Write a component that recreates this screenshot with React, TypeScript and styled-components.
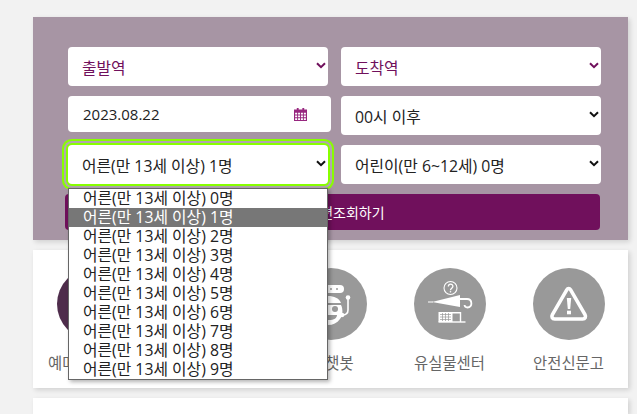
import React from "react";
import styled, { createGlobalStyle } from "styled-components";

const Global = createGlobalStyle`
  html, body { margin: 0; padding: 0; height: 414px; overflow: hidden; background: #f2f2f2; }
  body { font-family: "Open Sans", "Noto Sans CJK KR", sans-serif; }
`;

const Page = styled.div`
  width: 595px;
  margin-left: 33px;
  padding-top: 17px;
  display: flex;
  flex-direction: column;
  gap: 10px;
`;

const SearchPanel = styled.section`
  position: relative;
  height: 223px;
  box-sizing: border-box;
  padding: 30px 27px 0 35px;
  background: #a795a4;
  box-shadow: 2px 2px 5px rgba(0, 0, 0, 0.14);
`;

const FormGrid = styled.div`
  display: grid;
  grid-template-columns: 260px 260px;
  grid-auto-rows: 39px;
  column-gap: 13px;
  row-gap: 10px;
`;

const Field = styled.div<{ $tone?: "purple"; $focused?: boolean; $wide?: boolean; $short?: boolean }>`
  box-sizing: border-box;
  height: ${(p) => (p.$short ? "36px" : "39px")};
  width: ${(p) => (p.$wide ? "263px" : "260px")};
  display: flex;
  align-items: center;
  justify-content: space-between;
  padding: 2px 2px 0 14px;
  background: #fff;
  border-radius: 4px;
  font-size: 15.8px;
  color: ${(p) => (p.$tone === "purple" ? "#70105c" : "#222")};
  ${(p) => p.$focused && "box-shadow: 0 0 0 2px #88ff00, 0 0 0 4px #b2a5b0, 0 0 0 6px #88ff00;"}
`;

const DateField = styled(Field)`
  padding: 0 24px 0 15px;
  font-size: 15px;
`;

const Chevron = styled.svg<{ $tone?: "purple" }>`
  width: 10px;
  height: 7px;
  margin-bottom: 4px;
  fill: none;
  stroke: ${(p) => (p.$tone === "purple" ? "#70105c" : "#111")};
  stroke-width: 2;
  flex: none;
`;

const SubmitButton = styled.button`
  display: block;
  box-sizing: border-box;
  width: 535px;
  height: 36px;
  margin: 10px 0 0 -3px;
  padding: 0 0 0 14px;
  border: 0;
  border-radius: 4px;
  background: #70105c;
  color: #fff;
  font: inherit;
  font-size: 14px;
  text-align: center;
`;

const OptionList = styled.ul`
  position: absolute;
  left: 35px;
  top: 171px;
  z-index: 5;
  box-sizing: border-box;
  width: 260px;
  height: 192px;
  margin: 0;
  padding: 0;
  list-style: none;
  background: #fff;
  border: 1px solid #666;
  box-shadow: 2px 2px 4px rgba(0, 0, 0, 0.3);
`;

const Option = styled.li<{ $active?: boolean }>`
  height: 19px;
  line-height: 19px;
  padding-left: 14px;
  font-size: 15.8px;
  white-space: nowrap;
  color: ${(p) => (p.$active ? "#fff" : "#222")};
  background: ${(p) => (p.$active ? "#777" : "transparent")};
`;

const MenuCard = styled.section`
  height: 138px;
  box-sizing: border-box;
  padding-top: 18px;
  background: #fff;
  box-shadow: 2px 2px 5px rgba(0, 0, 0, 0.14);
  display: grid;
  grid-template-columns: repeat(5, 119px);
`;

const MenuItem = styled.div`
  display: flex;
  flex-direction: column;
  align-items: center;
  gap: 11px;
  font-size: 15.4px;
  color: #666;
  white-space: nowrap;
`;

const Circle = styled.div<{ $dark?: boolean }>`
  width: 72px;
  height: 72px;
  border-radius: 50%;
  background: ${(p) => (p.$dark ? "#4f2d4c" : "#999")};
  display: flex;
  align-items: center;
  justify-content: center;
`;

const BottomCard = styled.section`
  height: 16px;
  background: #fff;
  box-shadow: 2px 2px 5px rgba(0, 0, 0, 0.14);
`;

const ChevronIcon = ({ tone }: { tone?: "purple" }) => (
  <Chevron $tone={tone} viewBox="0 0 10 7">
    <path d="M1 1.200 5 5.200 9 1.200" />
  </Chevron>
);

const CalendarIcon = () => (
  <svg width="13" height="13" viewBox="0 0 14 14">
    <path fill="#97277f" fillRule="evenodd" d="M3 0h2v1.500h4V0h2v1.500h3V14H0V1.500h3zM1.200 5v2h2.200V5zm3.200 0v2h2.100V5zm3.100 0v2h2.100V5zm3.100 0v2h2.200V5zM1.200 8v2h2.200V8zm3.200 0v2h2.100V8zm3.100 0v2h2.100V8zm3.100 0v2h2.200V8zm-9.400 3v1.800h2.200V11zm3.200 0v1.800h2.100V11zm3.100 0v1.800h2.100V11zm3.100 0v1.800h2.200V11z" />
  </svg>
);

const TicketIcon = () => (
  <svg width="40" height="32" viewBox="0 0 40 32" fill="#fff">
    <path fillRule="evenodd" d="M2 6h36v20H2zM6 10v12h4V10zm8 0v3h16v-3zm0 6v3h16v-3z" />
  </svg>
);

const TrainIcon = () => (
  <svg width="36" height="36" viewBox="0 0 36 36" fill="#fff">
    <path fillRule="evenodd" d="M10 4h16a4 4 0 0 1 4 4v16a4 4 0 0 1-4 4H10a4 4 0 0 1-4-4V8a4 4 0 0 1 4-4zm0 4v8h16V8zm2 12a2 2 0 1 0 0 4 2 2 0 0 0 0-4zm12 0a2 2 0 1 0 0 4 2 2 0 0 0 0-4z" />
  </svg>
);

const BotIcon = () => (
  <svg width="72" height="72" viewBox="0 0 72 72">
    <rect x="20" y="17" width="29" height="8" rx="4" fill="#fff" />
    <circle cx="36" cy="21" r="1" fill="#999" />
    <circle cx="42" cy="21" r="1" fill="#999" />
    <path d="M20 35c1-4 7-7 13-7s11 2 13 7z" fill="#fff" />
    <path d="M20 37h26c2 4 2 10-1 14-3 4-7 6-12 6s-10-2-13-6c-3-4-2-10 0-14z" fill="#fff" />
    <circle cx="40" cy="41" r="3" fill="#999" />
    <circle cx="26" cy="41" r="3" fill="#999" />
    <path d="M26 47h16c0 3-3 5-8 5s-8-2-8-5z" fill="#999" />
    <path d="M53 30v12c0 3-2 5-6 5" fill="none" stroke="#fff" strokeWidth="1.600" />
    <circle cx="53" cy="29.500" r="2.300" fill="#fff" />
    <circle cx="47" cy="47" r="2.300" fill="#fff" />
  </svg>
);

const LostIcon = () => (
  <svg width="72" height="72" viewBox="0 0 72 72">
    <circle cx="36.500" cy="20" r="6.500" fill="none" stroke="#fff" strokeWidth="1.100" />
    <path d="M34.300 18.500c.2-3 4.600-3 4.600-.3 0 2-2.400 1.900-2.400 4" fill="none" stroke="#fff" strokeWidth="1.300" />
    <circle cx="36.500" cy="23.800" r=".8" fill="#fff" />
    <path d="M14 34h5" stroke="#fff" strokeWidth="1" />
    <path d="M18 34 46 27v12z" fill="#fff" />
    <path d="M46 31h7c5.500 0 6 8.500.5 8.500-1.500 0-2.800-1-3-2.500" fill="none" stroke="#fff" strokeWidth="1.800" />
    <rect x="24.500" y="44" width="14" height="10" fill="#fff" />
    <path d="M26 46.500h11M26 49h11M26 51.500h11M28.500 45v8M31.500 45v8M34.500 45v8" stroke="#999" strokeWidth=".7" />
    <path d="M38 44.700h8.500V54" fill="none" stroke="#fff" strokeWidth="1.400" />
    <path d="M24.500 54h27" stroke="#fff" strokeWidth="1.400" />
  </svg>
);

const AlertIcon = () => (
  <svg width="72" height="72" viewBox="0 0 72 72">
    <path d="M35.500 20.500c.8-.1 1.500.4 2 1.200l14.500 25c1.200 2.200.2 4.300-2.300 4.300H21.700c-2.500 0-3.500-2.100-2.300-4.300l14.500-25c.4-.8 1-1.200 1.600-1.200z" fill="none" stroke="#fff" strokeWidth="3.600" strokeLinejoin="round" />
    <path d="M33.800 30h4.400l-1 11h-2.400z" fill="#fff" />
    <rect x="34" y="42.700" width="4" height="3.600" fill="#fff" />
  </svg>
);

const adults = Array.from({ length: 10 }, (_, n) => n);

const menu = [
  { label: "예매내역 조회", icon: <TicketIcon />, dark: true },
  { label: "열차운행정보", icon: <TrainIcon /> },
  { label: "AI 챗봇", icon: <BotIcon /> },
  { label: "유실물센터", icon: <LostIcon /> },
  { label: "안전신문고", icon: <AlertIcon /> },
];

export default function App() {
  return (
    <>
      <Global />
      <Page>
        <SearchPanel>
          <FormGrid>
            <Field $tone="purple">
              출발역
              <ChevronIcon tone="purple" />
            </Field>
            <Field $tone="purple">
              도착역
              <ChevronIcon tone="purple" />
            </Field>
            <DateField $wide $short>
              2023.08.22
              <CalendarIcon />
            </DateField>
            <Field>
              00시 이후
              <ChevronIcon />
            </Field>
            <Field $focused>
              어른(만 13세 이상) 1명
              <ChevronIcon />
            </Field>
            <Field>
              어린이(만 6~12세) 0명
              <ChevronIcon />
            </Field>
          </FormGrid>
          <SubmitButton>열차편조회하기</SubmitButton>
          <OptionList>
            {adults.map((n) => (
              <Option key={n} $active={n === 1}>
                어른(만 13세 이상) {n}명
              </Option>
            ))}
          </OptionList>
        </SearchPanel>
        <MenuCard>
          {menu.map((m) => (
            <MenuItem key={m.label}>
              <Circle $dark={m.dark}>{m.icon}</Circle>
              {m.label}
            </MenuItem>
          ))}
        </MenuCard>
        <BottomCard />
      </Page>
    </>
  );
}
